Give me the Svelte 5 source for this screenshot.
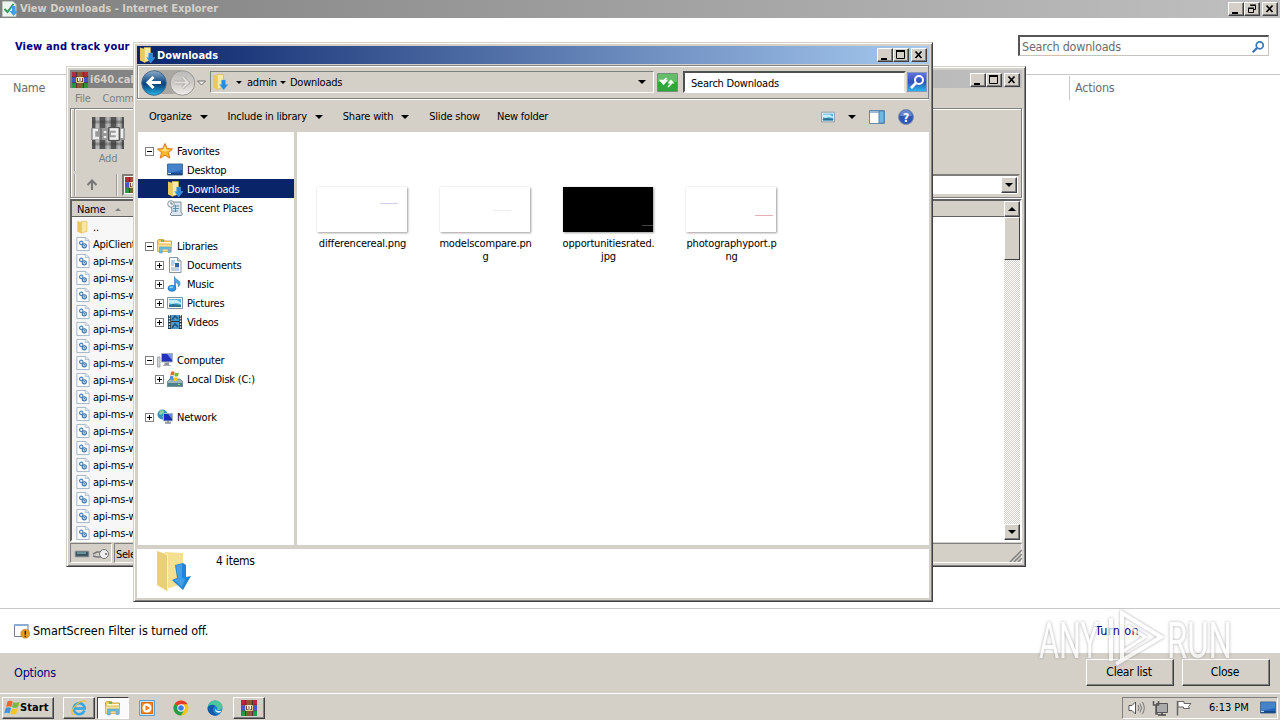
<script>
	const tree = [
		{ label: 'Favorites', icon: 'star', toggle: '-' },
		{ label: 'Desktop', icon: 'screen', level: 1 },
		{ label: 'Downloads', icon: 'downloads', level: 1, selected: true },
		{ label: 'Recent Places', icon: 'recent', level: 1 },
		{},
		{ label: 'Libraries', icon: 'folder', toggle: '-' },
		{ label: 'Documents', icon: 'document', toggle: '+', level: 1 },
		{ label: 'Music', icon: 'music', toggle: '+', level: 1 },
		{ label: 'Pictures', icon: 'picture', toggle: '+', level: 1 },
		{ label: 'Videos', icon: 'video', toggle: '+', level: 1 },
		{},
		{ label: 'Computer', icon: 'computer', toggle: '-' },
		{ label: 'Local Disk (C:)', icon: 'disk', toggle: '+', level: 1 },
		{},
		{ label: 'Network', icon: 'network', toggle: '+' }
	];

	const files = [
		{ lines: ['differencereal.png'], mark: 'blue' },
		{ lines: ['modelscompare.pn', 'g'], mark: 'grey' },
		{ lines: ['opportunitiesrated.', 'jpg'], mark: 'dark' },
		{ lines: ['photographyport.p', 'ng'], mark: 'red' }
	];

	const archive = ['ApiClient.dll', ...Array(17).fill('api-ms-win-core.dll')];

	const pinned = [
		{ icon: 'ie', state: 'raised' },
		{ icon: 'folder', state: 'pressed' },
		{ icon: 'player' },
		{ icon: 'chrome' },
		{ icon: 'edge' },
		{ icon: 'rar', state: 'raised' }
	];
</script>

{#snippet icon(name, size = 16)}
	<svg class="icon" width={size} height={size} viewBox="0 0 16 16" aria-hidden="true">
		{#if name === 'downloads'}
			<path d="M5 .5h6.500v12.500L5 15.500z" fill="#f8e9a6" stroke="#d6ae45" stroke-width=".6" />
			<path d="M1 .5l4.500 1.500v13.500L1 13.500z" fill="#eac85c" />
			<path d="M9.500 6H13.500v4.500H16L11.700 16 7.500 10.500H9.500z" fill="#2a8bdc" stroke="#6bb9ef" stroke-width=".4" />
		{:else if name === 'star'}
			<path d="M8 .5l2.200 5 5.400.5-4.100 3.600 1.300 5.500L8 12.200l-4.800 2.900 1.300-5.500L.4 6l5.400-.5z" fill="#fdb62f" stroke="#db7920" />
			<path d="M8 3l1.300 3.700 3.500.3L8 8.500 3.500 7l3-.5z" fill="#ffe48a" />
		{:else if name === 'screen'}
			<path d="M.5 2h15v11H.5z" fill="#2463b8" stroke="#4a6c93" />
			<path d="M1 2.500h14V8L6 10 1 11z" fill="#4682ca" />
			<path d="M1 12h14" stroke="#0d2d5c" /><path d="M1 11.500h3" stroke="#b6dcf5" />
		{:else if name === 'recent'}
			<path d="M4 2h10v10l1.500 2-1 1.500H4l-1-1.500 2-2z" fill="#dce8ef" stroke="#7f8d99" />
			<path d="M6 6h6M6 8.500h6M6 11h5M8.500 5v7" stroke="#5891b4" />
			<circle cx="4" cy="4" r="3.300" fill="#eef2f4" stroke="#8d999f" /><path d="M4 2v2h2" fill="none" stroke="#607a8b" />
		{:else if name === 'folder'}
			<path d="M.5 2.500l1-1h5l1 1.500h7v10H.5z" fill="#efcf67" stroke="#cda742" />
			<path d="M2 4h12v3H2z" fill="#fffbe2" /><path d="M.5 6h14v7.500H.5z" fill="#f7e293" stroke="#d9b757" />
			<path d="M2.500 14V9h11v5.500h-2.300V11h-6v4H2.500z" fill="#6ebce1" stroke="#4a98c4" stroke-width=".6" />
			<path d="M4 3h3" stroke="#50ad57" stroke-width="1.500" />
		{:else if name === 'oldfolder'}
			<path d="M6 1.500h6.500v11.500L6 15z" fill="#f9e7a1" stroke="#cfb157" stroke-width=".6" />
			<path d="M1.500 1l5 1.500V15.500l-5-2z" fill="#eac65f" />
		{:else if name === 'document'}
			<path d="M2.500.5h8l3.500 3.500v11.500h-11.500z" fill="#fff" stroke="#8795a0" /><path d="M10.500.5V4H14" fill="#d5e2ea" stroke="#8795a0" />
			<path d="M4 4h4M4 6h4M4 8h3M4 11h8M4 13h8" stroke="#70a2c8" /><path d="M8 6h4v4H8z" fill="#2e659e" />
		{:else if name === 'music'}
			<path d="M7.500 12V.5C8 4 13.500 4 13 8c-.2 1-.8 2-1.800 2.800.7-3-.7-4-2.700-4.300V12z" fill="#4ba6e0" stroke="#2c82c4" stroke-width=".7" />
			<ellipse cx="5" cy="12.300" rx="4" ry="3" fill="#2d94df" stroke="#1b6daf" stroke-width=".7" /><ellipse cx="4.300" cy="11.300" rx="2" ry="1" fill="#8ed2f7" />
		{:else if name === 'picture'}
			<path d="M.5 2.500h15v11H.5z" fill="#fff" stroke="#7f949f" /><path d="M2 4h12v8H2z" fill="#58b7df" />
			<path d="M2 5h8l4 3v1L9 8 5 9 2 8z" fill="#c8edf6" /><path d="M2 10l4-1 8 1v2H2z" fill="#2c7196" />
		{:else if name === 'video'}
			<path d="M1 1h14v14H1z" fill="#203544" /><path d="M4 1h8v6H4zM4 8h8v7H4z" fill="#4b9acb" />
			<path d="M2.500 1v14M13.500 1v14" stroke="#e1edf3" stroke-width="1.500" stroke-dasharray="1.500 1.300" />
			<path d="M5 6l3-4 3 3M5 14l3-4 3 3" fill="none" stroke="#1e5583" stroke-width="1.500" />
		{:else if name === 'computer'}
			<path d="M.5 5h2.500v10H.5z" fill="#d6d9dc" stroke="#858b91" stroke-width=".7" /><path d="M4.500 1.500h11v8.500h-11z" fill="#2431bd" stroke="#a8afb8" />
			<path d="M10 2h5v6z" fill="#7c97ed" /><path d="M8 10.500h4V13H7z" fill="#8c949b" /><path d="M6 13.500h8" stroke="#a8afb8" />
		{:else if name === 'disk'}
			<path d="M0 11l3-3h10l3 3v4.500H0z" fill="#9db5ba" stroke="#55747b" stroke-width=".7" /><path d="M.500 12h15v3H.5z" fill="#4d8189" />
			<path d="M11 13.500h2" stroke="#88e46d" />
			<path d="M4 1q2-1.500 3.500 0L7 4.500Q5 3.500 3.300 4.800z" fill="#f2652c" /><path d="M8 1.500q2 1 4 0L11 5q-2 1-3.500 0z" fill="#75b73a" />
			<path d="M3 5.500q2-1.500 3.500 0L6 9Q4 7.500 2.300 9z" fill="#4b8fdf" /><path d="M7.300 6q2 1 4 0L10 9.500q-2 1-3.300 0z" fill="#f6c930" />
		{:else if name === 'network'}
			<circle cx="5.500" cy="5.500" r="5" fill="#3493bc" /><path d="M3 1.500q5-1 4 2L4 6 2 5zM5 7h4l-2 3z" fill="#8fd09c" />
			<path d="M6.500 4.500h9v7.500h-9z" fill="#1c2cb8" stroke="#a5b4c2" /><path d="M11 5h4v5z" fill="#6688e6" /><path d="M8 14h6M11 12v2" stroke="#848d95" stroke-width="1.500" />
		{:else if name === 'rar'}
			<path d="M0 0h16v5H0z" fill="#b32b3c" /><path d="M0 5.500h16v5H0z" fill="#4459c4" /><path d="M0 11h16v5H0z" fill="#2c963f" />
			<path d="M0 5.200h16M0 10.700h16" stroke="#202030" stroke-width=".6" />
			<path d="M4.500 0v5M4.500 11v5M11.500 0v5M11.500 11v5" stroke="#5b3131" />
			<path d="M5.500 0h5v16h-5z" fill="#8a5831" />
			<path d="M4.500 5.500h7v5h-7z" fill="#7a4b2c" stroke="#e5c684" />
			<path d="M6.500 5.500V9h3V5.500M8 5v3" fill="none" stroke="#fff" />
		{:else if name === 'dll'}
			<path d="M1 .5h10L15 4v11.500H1z" fill="#fbfdff" stroke="#9badbf" /><path d="M10.500.5V4H15" fill="#dfe7ee" stroke="#9badbf" stroke-width=".7" />
			<circle cx="6" cy="6.700" r="2" fill="#d7ebfa" stroke="#4a83ba" stroke-width="1.200" /><circle cx="9.500" cy="10" r="2.400" fill="#b9d8f0" stroke="#3f75ac" stroke-width="1.200" />
			<circle cx="9.500" cy="10" r=".7" fill="#2d5787" />
		{:else if name === 'ie'}
			<path d="M13.400 10.500A5.500 5.500 0 1 1 13.700 8.500H4" fill="none" stroke="#36a5e2" stroke-width="2.600" />
			<path d="M15 1.500C11-.8 4 4 1.300 10.500c-1.200 3.200.2 4.800 3 3.500" fill="none" stroke="#efbf3e" stroke-width="1.300" />
		{:else if name === 'player'}
			<path d="M.5.500h15v15H.5z" fill="#cfe4f3" stroke="#5c9fd0" /><path d="M2.500 2.500h11v11h-11z" fill="#f18a22" stroke="#d56b12" />
			<circle cx="8" cy="8" r="4.500" fill="#fff" /><path d="M6.500 5.300v5.400L11 8z" fill="#ee7c17" />
		{:else if name === 'chrome'}
			<circle cx="8" cy="8" r="7.500" fill="#fbc116" /><path d="M8 8L1.500 4.250A7.500 7.500 0 0 1 14.500 4.250H8z" fill="#e33b2e" />
			<path d="M1.500 4.250A7.500 7.500 0 0 0 8 15.500L11.250 10 8 8z" fill="#269b4b" /><circle cx="8" cy="8" r="3.700" fill="#fff" /><circle cx="8" cy="8" r="2.800" fill="#3b7ded" />
		{:else if name === 'edge'}
			<circle cx="8" cy="8" r="7.500" fill="#1686cb" /><path d="M1 7C1.500 3 4.500.5 8.200.5c4 0 7.300 3 7.300 6 0 3-3 4.500-5.500 3.300C11.500 6 5 3 1 7z" fill="#49c79f" />
			<path d="M.6 8.500C1 4.500 6 4 8.500 6 5.500 6.500 5 11 8 13.500c2 1.500 4 1.200 5.500.3C8 18 .5 14.500.6 8.500z" fill="#1759ab" />
			<path d="M8.500 8c-.8 2 1.500 3.700 6 2.700-.5.8-1 1.300-1.500 1.800-3.500.8-6-1.500-4.500-4.500z" fill="#e4f4fa" />
		{:else if name === 'flag'}
			<path d="M3.500 1.500c2-1.300 3.500-1 5.200 0L7.300 7C5.500 6 4 6 2 7z" fill="#ef6430" />
			<path d="M9.500 2c2 1.300 4 1 6-.3L14 7c-2 1.200-4 1.200-6 0z" fill="#7bb93c" />
			<path d="M1.700 8c2-1.200 3.700-1 5.300 0l-1.500 5.500c-1.800-1-3.500-1-5.300 0z" fill="#4094dd" /><path d="M7.800 8.200c2 1.200 4 1 6-.2L12.300 13.500c-2 1.200-4 1.200-6 0z" fill="#f4c32f" />
		{:else if name === 'track'}
			<path d="M.5 .5h10.500l3 3v12H.5z" fill="#eef5ef" stroke="#bdc8c0" /><path d="M2.500 8l3 3 6-8" fill="none" stroke="#339956" stroke-width="2" />
			<path d="M10 5h3.500v5H16l-4.500 5L7.500 10H10z" fill="#479de0" />
		{:else if name === 'magnifier'}
			<circle cx="10" cy="6" r="4" fill="none" stroke="currentColor" stroke-width="2" /><path d="M7 9l-5 5" stroke="currentColor" stroke-width="2.600" />
		{:else if name === 'warning'}
			<path d="M.5 1.500h13.500v12H.5z" fill="#fff" stroke="#717b8a" /><path d="M0 2h14.500" stroke="#8bacd4" stroke-width="2" />
			<circle cx="11.300" cy="10.700" r="4.500" fill="#e6a021" stroke="#ba7612" stroke-width=".6" /><path d="M11.300 7.700v4M11.300 12.700v1.300" stroke="#372607" stroke-width="1.500" />
		{/if}
	</svg>
{/snippet}

{#snippet controls(restore = false)}
	<div class="controls">
		<button type="button" aria-label="Minimize"><svg width="12" height="10"><path d="M2 8h6v2H2z" /></svg></button>
		<button type="button" aria-label="Maximize">
			{#if restore}
				<svg width="12" height="10"><path d="M4.500 1.500h5v4h-2M4 1h6M2.500 4.500h5v4h-5zM2 4h6" fill="none" stroke="#000" /></svg>
			{:else}
				<svg width="12" height="10"><path d="M1.500 1v7.500h8V1M1 1h9" fill="none" stroke="#000" /><path d="M1 0h9v2H1z" /></svg>
			{/if}
		</button>
		<button class="close" type="button" aria-label="Close"><svg width="12" height="10"><path d="M2.500 1.500l6 6.500M8.500 1.500l-6 6.500" stroke="#000" stroke-width="1.700" /></svg></button>
	</div>
{/snippet}

<div class="desktop">
	<main class="ie">
		<header class="title-bar">
			{@render icon('track')}
			<strong>View Downloads - Internet Explorer</strong>
			{@render controls(true)}
		</header>
		<div class="ie-head">
			<h1>View and track your downloads</h1>
			<label class="ie-search"><span>Search downloads</span>{@render icon('magnifier', 14)}</label>
		</div>
		<div class="columns"><span>Name</span><span class="actions">Actions</span></div>
		<div class="smartscreen">
			{@render icon('warning')}
			<span>SmartScreen Filter is turned off.</span>
			<a href="#on">Turn on</a>
		</div>
		<footer class="ie-footer">
			<a href="#options">Options</a>
			<button type="button">Clear list</button>
			<button type="button">Close</button>
		</footer>
	</main>

	<section class="window rar">
		<header class="title-bar">
			{@render icon('rar')}
			<strong>i640.cab</strong>
			{@render controls()}
		</header>
		<nav class="rar-menu"><span>File</span><span>Commands</span></nav>
		<div class="rar-tools">
			<div class="rar-buttons">
				<div class="rar-add">
					<svg width="34" height="34" viewBox="0 0 34 34" aria-hidden="true">
						<path d="M1 1h32v32H1z" fill="#8d8d8d" />
						<path d="M1 1h3v32H1zM9 1h5v32H9zM20 1h5v32h-5zM31 1h2v32h-2z" fill="#555" />
						<path d="M6.500 1v32M17 1v32M28 1v32" stroke="#b8b8b8" stroke-width="3" />
						<path d="M1 6h32M1 28h32" stroke="#333" stroke-opacity=".35" stroke-width="3" />
						<path d="M0 12h34v12H0z" fill="#999" />
						<path d="M7 14H3v8h5M14 15v2M14 20v2M19 13.500h7v9h-7M20 18h6M31 13v9" fill="none" stroke="#eee" stroke-width="2.500" />
						<path d="M10 12v12M17.500 11.500h11v13h-11z" fill="none" stroke="#555" />
					</svg>
					<span>Add</span>
				</div>
			</div>
			<div class="rar-path">
				<svg width="14" height="14" viewBox="0 0 14 14" aria-hidden="true"><path d="M7 12V3M2.500 7L7 2.500 11.500 7" fill="none" stroke="#777" stroke-width="2" /></svg>
				<div class="divider"></div>
				<div class="rar-field">{@render icon('rar')}<button class="scroll-button" type="button" aria-label="Open list"><i class="caret"></i></button></div>
			</div>
		</div>
		<div class="rar-list">
			<div class="rar-rows">
				<div class="rar-header">Name <i class="sort"></i></div>
				<div class="rar-row">{@render icon('oldfolder')}<span>..</span></div>
				{#each archive as name}
					<div class="rar-row">{@render icon('dll')}<span>{name}</span></div>
				{/each}
			</div>
			<div class="scrollbar">
				<button class="scroll-button" type="button" aria-label="Scroll up"><i class="caret up"></i></button>
				<div class="thumb"></div>
				<button class="scroll-button" type="button" aria-label="Scroll down"><i class="caret"></i></button>
			</div>
		</div>
		<footer class="rar-status">
			<div class="status-icons">
				<svg width="36" height="12" viewBox="0 0 36 12" aria-hidden="true">
					<path d="M1 3h14v6H1z" fill="#3e5662" stroke="#aaa" /><path d="M3 5h9" stroke="#8dcbd1" />
					<path d="M19 6l4-2h4M19 8l4 1h4" fill="none" stroke="#777" stroke-width="1.500" /><circle cx="30" cy="6" r="4.500" fill="#eee" stroke="#777" /><circle cx="32" cy="6" r="1" fill="#666" />
				</svg>
			</div>
			<span>Selected 0 files</span>
			<svg class="grip" width="13" height="13" aria-hidden="true"><path d="M1 13L13 1M5 13l8-8M9 13l4-4" stroke="#808080" stroke-width="1.500" /></svg>
		</footer>
	</section>

	<section class="window explorer">
		<header class="title-bar active">
			{@render icon('downloads')}
			<strong>Downloads</strong>
			{@render controls()}
		</header>
		<div class="address-bar">
			<svg class="history" width="70" height="28" viewBox="0 0 70 28" aria-hidden="true">
				<defs>
					<linearGradient id="back" x2="0" y2="1"><stop stop-color="#8dadc6" /><stop offset=".45" stop-color="#17508d" /><stop offset=".55" stop-color="#08417c" /><stop offset="1" stop-color="#25b5e8" /></linearGradient>
					<linearGradient id="forward" x2="0" y2="1"><stop stop-color="#bdbcbb" /><stop offset=".5" stop-color="#cecbc7" /><stop offset="1" stop-color="#f0eeeb" /></linearGradient>
				</defs>
				<path d="M16 2h28q-13 6 0 24H16z" fill="#aaa7a2" />
				<circle cx="16" cy="15" r="12.300" fill="url(#back)" stroke="#4b6e8d" /><circle cx="44.500" cy="15" r="12.300" fill="url(#forward)" stroke="#9a9894" />
				<path d="M23 14.500H10M15.500 9L10 14.500l5.500 5.500" fill="none" stroke="#fff" stroke-width="3" />
				<path d="M37 14.500h13M44.500 9L50 14.500l-5.500 5.500" fill="none" stroke="#aaa7a3" stroke-width="3.500" /><path d="M37 14.500h13M44.500 9L50 14.500l-5.500 5.500" fill="none" stroke="#e1dfdc" stroke-width="2" />
				<path d="M59.500 13h8l-4 4z" fill="#eee" stroke="#77736f" />
			</svg>
			<div class="crumbs">
				{@render icon('downloads')}
				<i class="caret small"></i><span>admin</span><i class="caret small"></i><span>Downloads</span><i class="caret drop"></i>
			</div>
			<svg class="refresh" width="21" height="19" viewBox="0 0 21 19" aria-hidden="true">
				<path d="M.5.500h20v18H.5z" fill="#32a63b" stroke="#75917a" /><path d="M1 1h19v8H1z" fill="#66bd69" />
				<path d="M9.500 5L6.500 8v1M3.500 7.500h6L6.500 11zM11 14l3-3v-1" fill="#fff" stroke="#fff" stroke-width="1.500" /><path d="M10.500 10.500h7L14 6.500z" fill="#fff" />
			</svg>
			<div class="search"><span>Search Downloads</span></div>
			<div class="search-button">{@render icon('magnifier')}</div>
		</div>
		<nav class="commands">
			<span>Organize<i class="caret"></i></span>
			<span>Include in library<i class="caret"></i></span>
			<span>Share with<i class="caret"></i></span>
			<span>Slide show</span>
			<span>New folder</span>
			<div class="view-tools">
				{@render icon('picture', 14)}
				<i class="caret"></i>
				<svg width="16" height="14" viewBox="0 0 16 14" aria-hidden="true"><path d="M.5.500h15v13H.5z" fill="#fff" stroke="#6389ac" /><path d="M1 1h9v2H1z" fill="#9bbbd6" /><path d="M10 1h5v12h-5z" fill="#6eb7e0" stroke="#4e83ad" /></svg>
				<svg width="16" height="16" viewBox="0 0 16 16" aria-hidden="true"><circle cx="8" cy="8" r="7.500" fill="#3157b5" stroke="#8390a9" /><path d="M2 7a6 6 0 0 1 12 0z" fill="#6889d1" /><text x="8" y="12.500" text-anchor="middle">?</text></svg>
			</div>
		</nav>
		<div class="panes">
			<aside>
				{#each tree as item}
					<div class="node" class:child={item.level} class:selected={item.selected}>
						{#if item.label}
							<span class="toggle" class:boxed={item.toggle} class:plus={item.toggle === '+'}></span>
							{@render icon(item.icon)}
							<span>{item.label}</span>
						{/if}
					</div>
				{/each}
			</aside>
			<div class="files">
				{#each files as file}
					<figure>
						<div class="preview {file.mark}"><i></i></div>
						<figcaption>{#each file.lines as line}<span>{line}</span>{/each}</figcaption>
					</figure>
				{/each}
			</div>
		</div>
		<footer class="details">
			<svg width="36" height="42" viewBox="0 0 36 42" aria-hidden="true">
				<path d="M9 2l18 1v31l-17 5z" fill="#f5df91" /><path d="M1 1l10 3v37L1 35z" fill="#e8cf78" /><path d="M1 1l10 3h1v37h-1V5z" fill="#faf0b9" />
				<path d="M19 15l8-2 3 2v12l5-1-8 14-11-10 5-2z" fill="#2185d7" /><path d="M20 15.500l6-1.500v14l3 1-3 8-8-7 4-1z" fill="#459fe2" />
			</svg>
			<span>4 items</span>
		</footer>
	</section>

	<div class="taskbar">
		<button class="start" type="button">{@render icon('flag')}<b>Start</b></button>
		<div class="pinned">
			{#each pinned as item}
				<div class="task {item.state ?? ''}">{@render icon(item.icon)}</div>
			{/each}
		</div>
		<div class="tray">
			<svg width="64" height="16" viewBox="0 0 64 16" aria-hidden="true">
				<path d="M1 5.500h3L7.500 2v12L4 10.500H1z" fill="#fff" stroke="#555" /><path d="M10 5q2 3 0 6M12 3.500q3 4.500 0 9M14.500 2q3.500 6 0 12" fill="none" stroke="#777" />
				<path d="M28.500 3.500h11v9h-11z" fill="#aaa" stroke="#555" /><path d="M30 15h8M34 13v2" stroke="#444" stroke-width="1.500" /><path d="M25.500 1v4h5V1M28 5v9h2" fill="none" stroke="#555" stroke-width="1.500" />
				<path d="M49.500 1v14.500" stroke="#666" stroke-width="1.500" /><path d="M50 1.500h6v2h7l-2.500 3 1 2h-6V7H50z" fill="#fff" stroke="#666" />
			</svg>
			<time>6:13 PM</time>
			{@render icon('screen')}
		</div>
	</div>

	<svg class="watermark" width="214" height="70" viewBox="0 0 214 70" aria-hidden="true">
		<text x="3" y="53" textLength="60" lengthAdjust="spacingAndGlyphs">ANY</text>
		<path d="M75 13v43M86 56V8l39 24-45 27" fill="none" stroke="#fff" stroke-width="4" />
		<path d="M86 20v27l23-15L92 21" fill="none" stroke="#fff" stroke-width="3" />
		<text x="131" y="53" textLength="65" lengthAdjust="spacingAndGlyphs">RUN</text>
	</svg>
</div>

<style>
	:global(body) {
		overflow: hidden;
	}

	.desktop {
		position: relative;
		width: 1280px;
		height: 720px;
		overflow: hidden;
		display: flex;
		flex-direction: column;
		background: #fff;
		color: #000;
		font: 11px/13px 'DejaVu Sans Condensed', 'DejaVu Sans', sans-serif;
		letter-spacing: -0.22px;
		white-space: nowrap;
	}

	.desktop * {
		box-sizing: border-box;
	}

	button {
		padding: 0;
		border: 1px solid;
		border-color: #fff #404040 #404040 #fff;
		border-radius: 0;
		background: #d4d0c8;
		box-shadow: inset -1px -1px #808080;
		color: #000;
		font: inherit;
		letter-spacing: inherit;
	}

	.icon {
		display: block;
		flex: none;
	}

	a {
		color: #000080;
		text-decoration: none;
	}

	.title-bar {
		display: flex;
		align-items: center;
		height: 18px;
		flex: none;
		gap: 2px;
		padding: 0 2px;
		background: linear-gradient(90deg, #808080, #c0c0c0);
		color: #d4d0c8;
		letter-spacing: 0;
	}

	.title-bar.active {
		background: linear-gradient(90deg, #0a246a, #a6caf0);
		color: #fff;
	}

	.controls {
		display: flex;
		margin-left: auto;
	}

	.controls button {
		display: grid;
		place-items: center;
		width: 16px;
		height: 14px;
	}

	.controls .close {
		margin-left: 2px;
	}

	.ie {
		height: 693px;
		display: flex;
		flex-direction: column;
		font-size: 12.5px;
		line-height: 16px;
	}

	.ie > .title-bar {
		font-size: 11px;
	}

	.ie-head {
		height: 57px;
		display: flex;
		align-items: center;
		justify-content: space-between;
		padding: 0 11px 1px 15px;
		border-bottom: 1px solid #c8c8c8;
	}

	h1 {
		margin: 2px 0 0;
		color: #000080;
		font-size: 11px;
		letter-spacing: 0.15px;
	}

	.ie-search {
		width: 251px;
		height: 21px;
		display: flex;
		align-items: center;
		justify-content: space-between;
		padding: 1px 3px 0 2px;
		border: 1px solid #c6c3bd;
		border-top: 2px solid #555;
		border-left: 2px solid #555;
		color: #6d6d6d;
	}

	.ie-search .icon {
		color: #3b78bb;
	}

	.columns {
		height: 24px;
		display: flex;
		align-items: center;
		justify-content: space-between;
		padding: 1px 0 0 13px;
		color: #6d6d6d;
	}

	.actions {
		width: 211px;
		padding: 4px 5px;
		border-left: 1px solid #c8c8c8;
	}

	.smartscreen {
		height: 45px;
		display: flex;
		align-items: center;
		gap: 3px;
		margin-top: auto;
		padding: 0 141px 0 14px;
		border-top: 1px solid #c8c8c8;
		letter-spacing: -0.09px;
	}

	.smartscreen a {
		margin-left: auto;
		letter-spacing: 0.4px;
	}

	.ie-footer {
		height: 40px;
		display: flex;
		align-items: center;
		gap: 8px;
		padding: 0 10px 2px 14px;
		background: #d4d0c8;
	}

	.ie-footer a {
		margin: 2px auto 0 0;
	}

	.ie-footer button {
		width: 88px;
		height: 27px;
		padding-right: 2px;
		font-size: 12px;
	}

	.window {
		position: absolute;
		display: flex;
		flex-direction: column;
		padding: 3px;
		border: 1px solid;
		border-color: #d4d0c8 #404040 #404040 #d4d0c8;
		background: #d4d0c8;
		box-shadow: inset 1px 1px #fff, inset -1px -1px #808080;
	}

	.rar {
		left: 66px;
		top: 66px;
		width: 960px;
		height: 501px;
	}

	.rar > .title-bar {
		padding-top: 1px;
	}

	.rar-menu {
		height: 20px;
		display: flex;
		align-items: center;
		gap: 12px;
		padding: 1px 0 0 5px;
		color: #808080;
	}

	.rar-tools {
		height: 91px;
		border: 1px solid #808080;
		box-shadow: inset 1px 1px #fff, 1px 1px #fff;
	}

	.rar-buttons {
		height: 62px;
		padding: 7px 0 0 15px;
	}

	.rar-add {
		width: 34px;
		display: flex;
		flex-direction: column;
		align-items: center;
		gap: 2px;
		color: #808080;
	}

	.rar-buttons,
	.rar-path {
		margin-left: 3px;
		border-left: 2px groove #eee;
	}

	.rar-path {
		height: 22px;
		display: flex;
		align-items: center;
		margin-top: 3px;
		padding-left: 9px;
	}

	.divider {
		height: 22px;
		margin-left: 17px;
		border-left: 2px groove #eee;
	}

	.rar-field {
		height: 22px;
		flex: 1;
		display: flex;
		align-items: center;
		justify-content: space-between;
		margin-left: 4px;
		margin-right: 1px;
		padding: 1px 1px 1px 1px;
		border: 2px inset #d4d0c8;
		background: #fff;
	}

	.scroll-button {
		width: 16px;
		height: 16px;
		display: grid;
		place-items: center;
		flex: none;
	}

	.rar-list {
		height: 343px;
		display: flex;
		margin-top: 1px;
		border: 2px solid;
		border-color: #606060 #fff #fff #606060;
		background: #fff;
	}

	.rar-rows {
		flex: 1;
		overflow: hidden;
	}

	.rar-header {
		height: 16px;
		display: flex;
		align-items: center;
		gap: 10px;
		margin-bottom: 1px;
		padding: 2px 0 0 5px;
		border-bottom: 1px solid #606060;
		background: #d4d0c8;
	}

	.sort {
		border: 3px solid transparent;
		border-top: 0;
		border-bottom: 3px solid #808080;
	}

	.rar-row {
		width: 500px;
		height: 17px;
		display: flex;
		align-items: center;
		gap: 3px;
		padding: 1px 0 0 4px;
		background: #f7f7f7;
	}

	.rar-row .icon {
		width: 14px;
	}

	.scrollbar {
		width: 16px;
		display: flex;
		flex-direction: column;
		background: repeating-conic-gradient(#fff 0 25%, #d4d0c8 0 50%) 0 0 / 2px 2px;
	}

	.thumb {
		height: 43px;
		margin-bottom: auto;
		border: 1px solid;
		border-color: #fff #404040 #404040 #fff;
		background: #d4d0c8;
	}

	.rar-status {
		height: 20px;
		display: flex;
		margin-top: 1px;
		gap: 2px;
	}

	.status-icons,
	.rar-status > span {
		border: 1px solid;
		border-color: #808080 #fff #fff #808080;
		padding: 4px 1px 0;
	}

	.status-icons {
		width: 42px;
		padding-left: 3px;
	}

	.rar-status > span {
		flex: 1;
		letter-spacing: -0.4px;
	}

	.grip {
		margin: 6px 0 0 -15px;
	}

	.caret {
		display: inline-block;
		border: 4px solid transparent;
		border-top-color: #000;
		border-bottom: 0;
	}

	.caret.up {
		border-bottom: 4px solid #000;
		border-top: 0;
	}

	.caret.small {
		border-width: 3px 3px 0;
	}

	.explorer {
		left: 133px;
		top: 42px;
		width: 800px;
		height: 560px;
	}

	.address-bar {
		height: 34px;
		display: flex;
		align-items: center;
		margin-top: 1px;
		border: 1px solid #808080;
		box-shadow: inset 1px 1px #fff, 0 1px #fff;
	}

	.history {
		flex: none;
		margin-right: 2px;
	}

	.crumbs {
		height: 22px;
		flex: 1;
		display: flex;
		align-items: center;
		padding: 0 7px 0 1px;
		border: 1px solid;
		border-color: #808080 #fff #fff #808080;
	}

	.crumbs .small {
		margin: 0 5px 0 8px;
	}

	.crumbs span + .small {
		margin: 0 4px 0 3px;
	}

	.drop {
		margin-left: auto;
	}

	.refresh {
		flex: none;
		margin-left: 3px;
	}

	.search {
		width: 223px;
		height: 22px;
		margin-left: 5px;
		padding: 4px 6px 0;
		border: 2px solid;
		border-color: #505050 #e5e2dd #fff #505050;
		background: #fff;
	}

	.search-button {
		width: 20px;
		height: 20px;
		display: grid;
		place-items: center;
		margin: 0 1px;
		border: 1px solid #8499bd;
		background: linear-gradient(#6274db, #2f4fc5 50%, #2cb5eb);
		color: #fff;
	}

	.commands {
		height: 33px;
		display: flex;
		align-items: center;
		gap: 20px;
		padding: 2px 15px 0 12px;
	}

	.commands span {
		display: flex;
		align-items: center;
	}

	.commands span .caret {
		margin-left: 8px;
	}

	.commands span:nth-child(4) {
		margin-right: -3px;
	}

	.view-tools {
		display: flex;
		align-items: center;
		gap: 13px;
		margin-left: auto;
	}

	.view-tools text {
		fill: #fff;
		font-size: 12px;
		font-weight: 700;
	}

	.panes {
		height: 413px;
		display: flex;
		background: #fff;
	}

	aside {
		width: 160px;
		padding-top: 9px;
		border-left: 1px solid #d4d0c8;
		border-right: 3px solid #d4d0c8;
	}

	.node {
		height: 19px;
		display: flex;
		align-items: center;
		padding: 0 0 0 7px;
	}

	.node.child {
		padding-left: 17px;
	}

	.node > span {
		margin-top: 1px;
	}

	.node .icon {
		margin: 0 4px 0 3px;
	}

	.selected {
		background: #0a246a;
		color: #fff;
	}

	.toggle {
		width: 9px;
		height: 9px;
	}

	.boxed {
		border: 1px solid #808080;
		background: linear-gradient(#000, #000) center / 5px 1px no-repeat;
	}

	.plus {
		background: linear-gradient(#000, #000) center / 5px 1px no-repeat, linear-gradient(#000, #000) center / 1px 5px no-repeat;
	}

	.files {
		display: flex;
		align-items: flex-start;
		gap: 23px;
		padding: 55px 0 0 15px;
	}

	figure {
		width: 100px;
		margin: 0;
	}

	.preview {
		width: 90px;
		height: 45px;
		display: flex;
		margin: 0 5px;
		background: #fff;
		box-shadow: 0 0 1px #ccc, 1px 1px 2px #999;
	}

	.preview i {
		width: 18px;
		height: 1px;
		margin: 16px 0 0 63px;
		background: #cfd2ee;
	}

	.grey i {
		margin: 23px 0 0 53px;
		background: #eeece9;
	}

	.red i {
		margin: 28px 0 0 69px;
		background: #e9aeb4;
	}

	.dark {
		background: #000;
	}

	.dark i {
		width: 11px;
		margin: 38px 0 0 79px;
		background: #444;
	}

	figcaption {
		display: flex;
		flex-direction: column;
		align-items: center;
		margin-top: 5px;
		padding-left: 1px;
		letter-spacing: -0.18px;
	}

	.details {
		height: 53px;
		display: flex;
		padding: 1px 0 0 19px;
		gap: 24px;
		border-top: 4px solid #d4d0c8;
		background: #fff;
	}

	.details span {
		margin-top: 5px;
		font-size: 12px;
	}

	.taskbar {
		height: 27px;
		display: flex;
		align-items: center;
		padding: 1px 2px 0;
		border-top: 1px solid #fff;
		background: #d4d0c8;
	}

	.start {
		width: 52px;
		height: 22px;
		display: flex;
		align-items: center;
		gap: 0;
		padding-left: 1px;
		letter-spacing: 0.1px;
	}

	.pinned {
		display: flex;
		gap: 2px;
		margin-left: 9px;
	}

	.task {
		width: 32px;
		height: 22px;
		display: grid;
		place-items: center;
		border: 1px solid transparent;
	}

	.task.raised {
		border-color: #fff #404040 #404040 #fff;
		box-shadow: inset -1px -1px #808080;
	}

	.task.pressed {
		border-color: #404040 #fff #fff #404040;
		background: #fafafa;
	}

	.tray {
		width: 156px;
		height: 22px;
		display: flex;
		align-items: center;
		margin-left: auto;
		padding: 0 1px 0 5px;
		border: 1px solid;
		border-color: #808080 #fff #fff #808080;
	}

	.tray time {
		margin: 0 auto 0 17px;
		letter-spacing: 0;
	}

	.watermark {
		position: absolute;
		left: 1036px;
		top: 605px;
		opacity: 0.7;
		filter: drop-shadow(0 0 1.5px #888);
	}

	.watermark text {
		fill: #fff;
		font: 400 50px Roboto, sans-serif;
		letter-spacing: 0;
	}
</style>
